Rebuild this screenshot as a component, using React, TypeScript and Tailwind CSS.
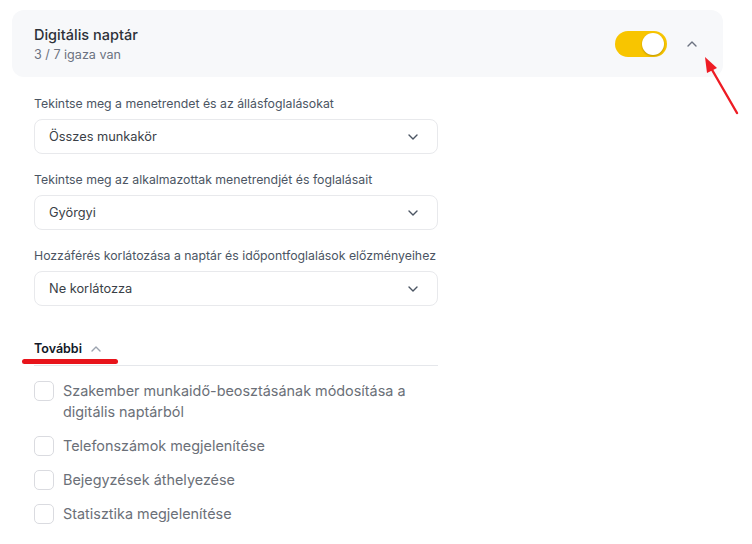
import React, { useState } from 'react';

const selects = [
    { label: 'Tekintse meg a menetrendet és az állásfoglalásokat', value: 'Összes munkakör' },
    { label: 'Tekintse meg az alkalmazottak menetrendjét és foglalásait', value: 'Györgyi' },
    { label: 'Hozzáférés korlátozása a naptár és időpontfoglalások előzményeihez', value: 'Ne korlátozza' },
];

const extras = [
    'Szakember munkaidő-beosztásának módosítása a digitális naptárból',
    'Telefonszámok megjelenítése',
    'Bejegyzések áthelyezése',
    'Statisztika megjelenítése',
];

const Chevron: React.FC<{ up?: boolean; className?: string }> = ({ up, className }) => (
    <svg width="10" height="6" viewBox="0 0 10 6" fill="none" className={className}>
        <path d={up ? 'M1 5l4-4 4 4' : 'M1 1l4 4 4-4'} stroke="currentColor" strokeWidth="1.4" strokeLinecap="round" strokeLinejoin="round" />
    </svg>
);

const App: React.FC = () => {
    const [enabled, setEnabled] = useState(true);
    const [checked, setChecked] = useState<boolean[]>(extras.map(() => false));

    return (
        <div className="relative w-[752px] h-[544px] bg-white overflow-hidden font-['Inter',sans-serif]">
            <div className="pt-[10px] pl-[12px] pr-[29px]">
                {/* header card */}
                <div className="h-[67px] rounded-xl bg-[#f7f8fa] flex items-center pl-[22px] pr-[26px]">
                    <div className="flex-1 pt-[1px]">
                        <div className="text-[14.5px] leading-[20px] font-medium text-[#2d3138]">Digitális naptár</div>
                        <div className="mt-[1px] text-[12.6px] leading-[18px] text-[#6b7280]">3 / 7 igaza van</div>
                    </div>
                    <button
                        onClick={() => setEnabled(!enabled)}
                        className={`w-[52px] h-[26px] rounded-full flex items-center px-[3px] ${enabled ? 'bg-[#f8c500] justify-end' : 'bg-gray-300 justify-start'}`}
                    >
                        <span className="w-[22px] h-[22px] rounded-full bg-white shadow-[0_1px_2px_rgba(0,0,0,0.25)]" />
                    </button>
                    <Chevron up className="ml-[20px] text-[#6b7280]" />
                </div>
            </div>

            <div className="pl-[34px] w-[438px] pt-[18px]">
                <div className="flex flex-col gap-[17px]">
                    {selects.map(s => (
                        <div key={s.label}>
                            <div className="text-[12.3px] leading-[17px] text-[#4b5563] whitespace-nowrap">{s.label}</div>
                            <div className="mt-[7px] h-[35px] rounded-lg border border-[#e8e9ec] flex items-center justify-between pl-[14px] pr-[19px]">
                                <span className="text-[12.8px] text-[#3a3f47]">{s.value}</span>
                                <Chevron className="text-[#4b5563]" />
                            </div>
                        </div>
                    ))}
                </div>

                <div className="mt-[34px] border-b border-[#e5e7eb] pb-[7px] flex items-center gap-[9px]">
                    <span className="text-[12.5px] leading-[18px] font-semibold text-[#111827]">További</span>
                    <Chevron up className="text-[#9ca3af]" />
                </div>

                <div className="mt-[14px] flex flex-col gap-[13px]">
                    {extras.map((t, i) => (
                        <label key={t} className="flex items-start gap-[9px] cursor-pointer">
                            <input
                                type="checkbox"
                                checked={checked[i]}
                                onChange={() => setChecked(checked.map((c, j) => (j === i ? !c : c)))}
                                className="appearance-none shrink-0 mt-[0.5px] w-[20px] h-[20px] rounded-[5px] border border-[#dadbe0] bg-white"
                            />
                            <span className="text-[14.4px] leading-[21px] text-[#6b7078] w-[360px]">{t}</span>
                        </label>
                    ))}
                </div>
            </div>

            {/* annotations */}
            <div className="absolute left-[22px] top-[359px] w-[96px] h-[5px] rounded-full bg-[#e8141b]" />
            <svg className="absolute left-[696px] top-[52px]" width="50" height="66" viewBox="0 0 50 66">
                <line x1="41" y1="61" x2="15" y2="16" stroke="#ee1c24" strokeWidth="2.4" strokeLinecap="round" />
                <polygon points="9,5 21,16 11,21" fill="#ee1c24" />
            </svg>
        </div>
    );
};

export default App;
